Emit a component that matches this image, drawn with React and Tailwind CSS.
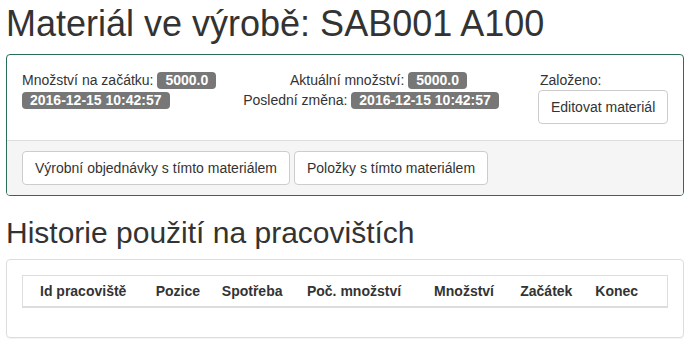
import React from 'react';

const Badge = ({ children }) => (
  <span className="inline-block h-[17px] px-[8px] rounded-[4px] bg-[#777] text-white font-bold text-[14px] leading-[17px]">
    {children}
  </span>
);

const Button = ({ children }) => (
  <button className="inline-block whitespace-nowrap px-[12px] py-[6px] text-[14px] leading-[20px] text-[#333] bg-white border border-[#ccc] rounded-[4px]">
    {children}
  </button>
);

const HEADERS = [
  { label: 'Id pracoviště', w: 'w-[133px] pl-[17px]' },
  { label: 'Pozice', w: 'w-[66px]' },
  { label: 'Spotřeba', w: 'w-[85px]' },
  { label: 'Poč. množství', w: 'w-[127px]' },
  { label: 'Množství', w: 'w-[86px]' },
  { label: 'Začátek', w: 'w-[75px]' },
  { label: 'Konec', w: 'w-[72px]' },
];

export default function App() {
  return (
    <div className="min-h-screen bg-white text-[#333] font-['Liberation_Sans',Arial,sans-serif] text-[14px] leading-[20px] pt-[4px] px-[6px] w-[690px]">
      <h1 className="text-[36px] leading-[1.1] font-medium mb-[10px]">Materiál ve výrobě: SAB001 A100</h1>

      {/* Material panel */}
      <div className="border border-[#2a6e55] rounded-[4px] overflow-hidden mb-[20px]">
        <div className="pt-[15px] pb-[16px] px-[15px] grid grid-cols-[205px_288px_1fr]">
          <div>
            <div>
              Množství na začátku: <Badge>5000.0</Badge>
            </div>
            <div>
              <Badge>2016-12-15 10:42:57</Badge>
            </div>
          </div>
          <div className="text-center">
            <div className="pl-[15px]">
              Aktuální množství: <Badge>5000.0</Badge>
            </div>
            <div>
              Poslední změna: <Badge>2016-12-15 10:42:57</Badge>
            </div>
          </div>
          <div className="pl-[23px]">
            <div className="pl-[2px]">Založeno:</div>
            <Button>Editovat materiál</Button>
          </div>
        </div>
        <div className="bg-[#f5f5f5] border-t border-[#ddd] py-[10px] px-[15px] flex gap-[4px]">
          <Button>Výrobní objednávky s tímto materiálem</Button>
          <Button>Položky s tímto materiálem</Button>
        </div>
      </div>

      <h2 className="text-[30px] leading-[1.1] font-medium mb-[10px]">Historie použití na pracovištích</h2>

      {/* History panel */}
      <div className="border border-[#ddd] rounded-[4px] shadow-[0_1px_1px_rgba(0,0,0,0.05)] pt-[15px] pb-[15px] px-[15px]">
        <table className="w-full table-fixed border-collapse border border-[#ddd] mb-[14px]">
          <thead>
            <tr>
              {HEADERS.map(h => (
                <th key={h.label} className={`${h.w} text-left font-bold py-[5px] border-b-2 border-[#ddd] whitespace-nowrap`}>
                  {h.label}
                </th>
              ))}
            </tr>
          </thead>
        </table>
      </div>
    </div>
  );
}
